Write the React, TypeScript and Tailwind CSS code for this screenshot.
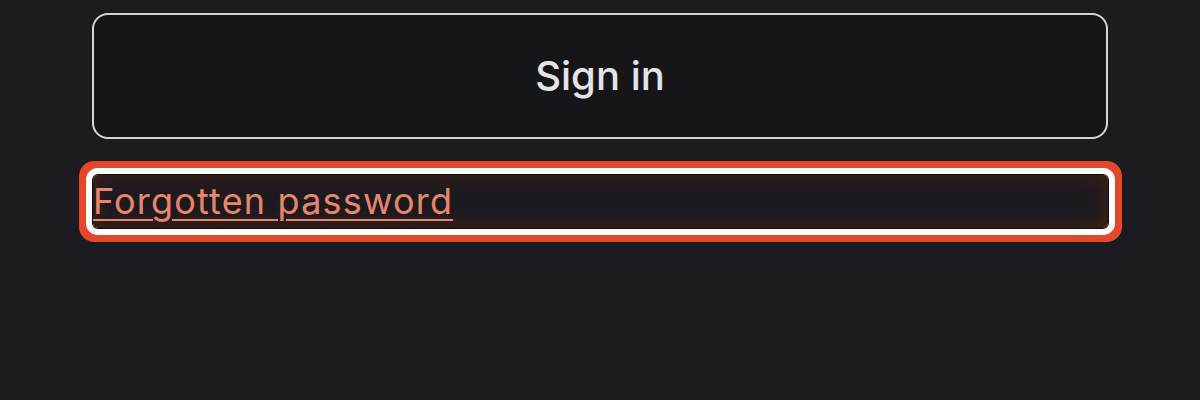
import React from "react";

export default function App() {
  return (
    <div
      className="min-h-[400px] w-full bg-[#1c1b20] px-[92px] pt-[13px]"
      style={{ fontFamily: "Inter, 'Noto Sans', sans-serif" }}
    >
      <button
        type="button"
        className="flex h-[126px] w-full items-center justify-center rounded-[16px] border-2 border-[#d4d4d8] bg-[#161619] text-[40px] font-medium text-[#e4e4e7]"
      >
        Sign in
      </button>
      <div className="mt-[36px] pl-px">
        <a
          href="#"
          className="block rounded-[5px] text-[36px] leading-[53px] tracking-[0.033em] text-[#e8866b] underline decoration-[2px] underline-offset-[5px] shadow-[0_0_0_1px_#0c0a0b,0_0_0_7px_#ffffff,0_0_0_14px_#e4472b,inset_0_0_22px_rgba(150,40,20,0.35)]"
        >
          Forgotten password
        </a>
      </div>
    </div>
  );
}
